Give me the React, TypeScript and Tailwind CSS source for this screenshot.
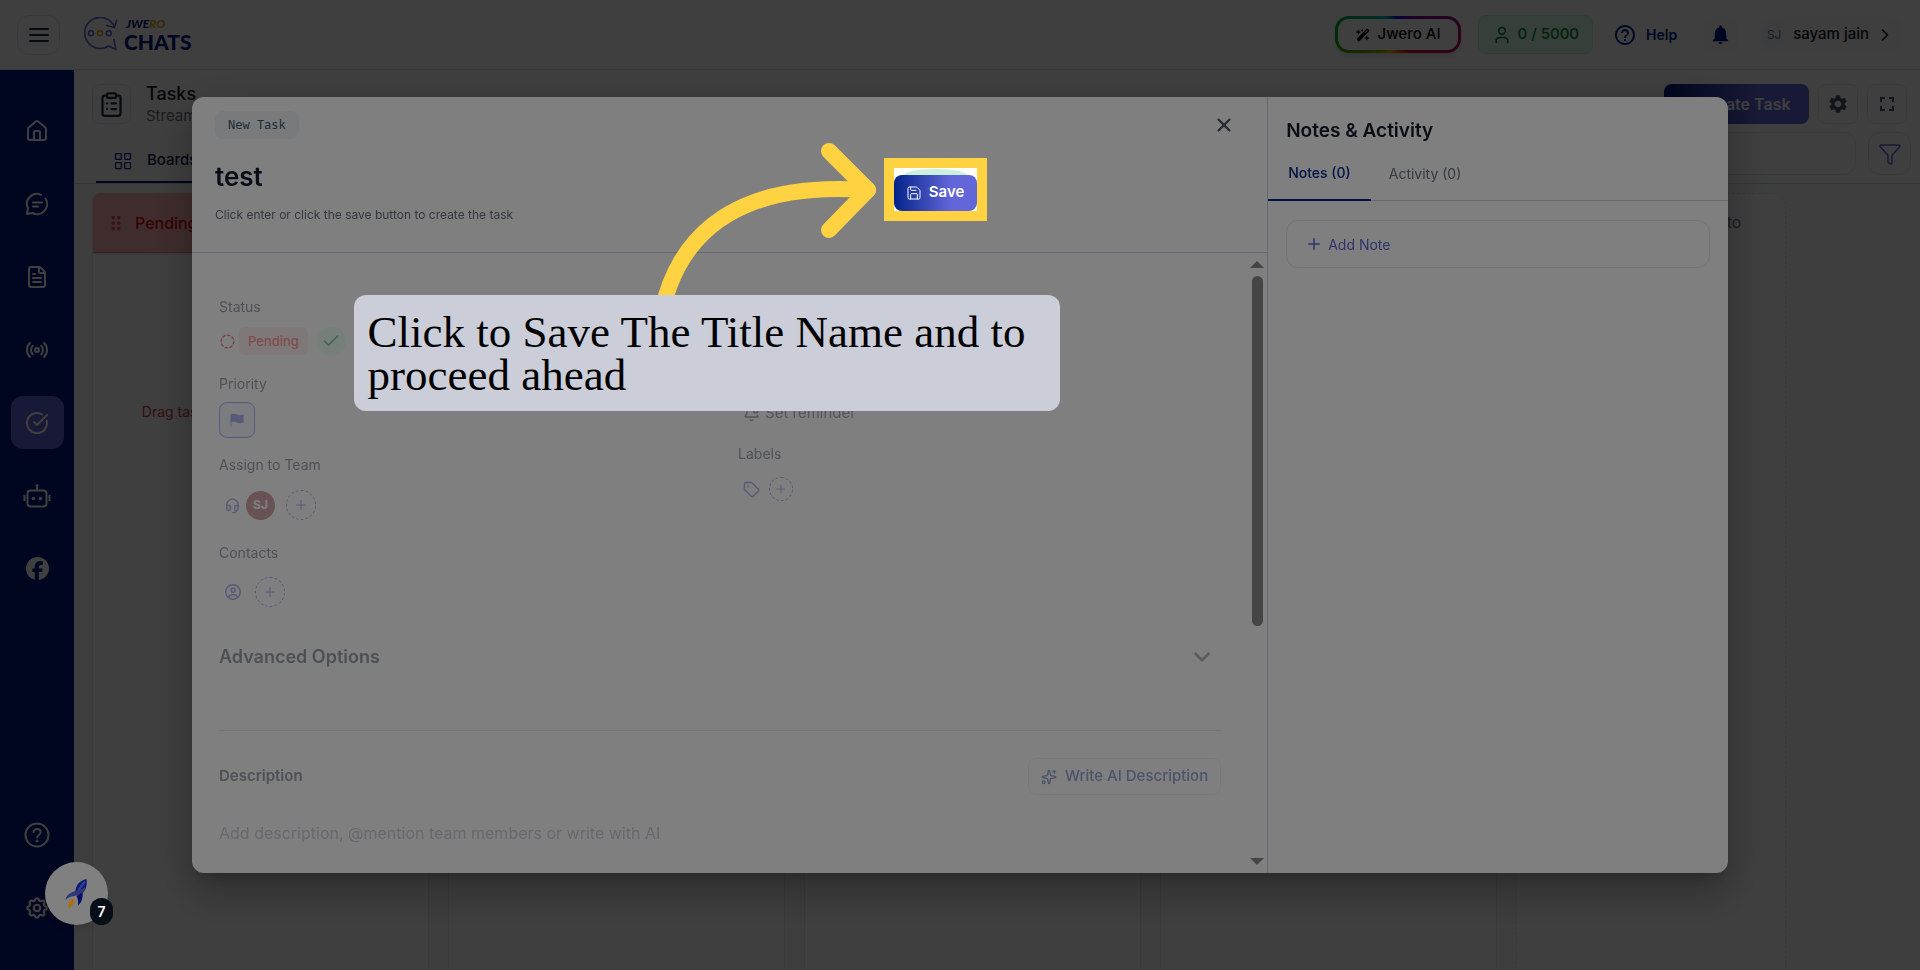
import { useState, type ReactNode } from "react"
import {
  BellDot,
  Check,
  ChevronDown,
  ChevronRight,
  CircleCheckBig,
  ClipboardList,
  FileText,
  Funnel,
  House,
  LayoutGrid,
  Plus,
  Radio,
  Save,
  Sparkles,
  Tag,
  User,
  X,
} from "lucide-react"
import { FaFacebook, FaRegCircleUser, FaWandMagicSparkles } from "react-icons/fa6"
import { HiFlag } from "react-icons/hi2"
import {
  MdDragIndicator,
  MdFullscreen,
  MdHelpOutline,
  MdNotifications,
  MdSettings,
} from "react-icons/md"
import { TbCircleDashed, TbHeadset, TbSettings } from "react-icons/tb"

function MenuIcon() {
  return (
    <svg width="20" height="16" viewBox="0 0 20 16" fill="none" stroke="currentColor" strokeWidth="1.800" strokeLinecap="round">
      <path d="M1 2h18M1 8h18M1 14h18" />
    </svg>
  )
}

function ChatIcon() {
  return (
    <svg width="24" height="24" viewBox="0 0 24 24" fill="none" stroke="currentColor" strokeWidth="2" strokeLinecap="round" strokeLinejoin="round">
      <path d="M16 2.800A10 10 0 0 0 3 16.400L2 22l5.500-1A10 10 0 0 0 20.500 6.700" />
      <path d="M8 10.500h9M8 14.500h5" />
    </svg>
  )
}

function BotIcon() {
  return (
    <svg width="28" height="26" viewBox="0 0 28 26" fill="none" stroke="currentColor" strokeWidth="2" strokeLinejoin="round">
      <rect x="4.5" y="7.5" width="19" height="16" rx="3" />
      <path d="M14 7.500V3M1.500 12v6M26.500 12v6" />
      <circle cx="14" cy="2.500" r="1.500" fill="currentColor" stroke="none" />
      <circle cx="10.500" cy="15.500" r="1.800" fill="currentColor" stroke="none" />
      <circle cx="17.500" cy="15.500" r="1.800" fill="currentColor" stroke="none" />
    </svg>
  )
}

function QuestionIcon() {
  return (
    <svg width="26" height="26" viewBox="0 0 26 26" fill="none" stroke="currentColor" strokeWidth="2" strokeLinecap="round">
      <circle cx="13" cy="13" r="11.500" />
      <path d="M9.600 10.200c.3-2 1.700-3.100 3.500-3.100 2 0 3.500 1.300 3.500 3.200 0 2.700-3.500 2.800-3.500 5.300" />
      <circle cx="13.100" cy="19" r="0.600" fill="currentColor" />
    </svg>
  )
}

function LogoMark() {
  return (
    <svg width="34" height="35" viewBox="0 0 34 35" fill="none" stroke="#6366c9" strokeWidth="1.600" strokeLinejoin="round" strokeLinecap="round">
      <path d="M30.500 10A15.500 15.500 0 1 0 24.500 29L31.800 32.500L29.800 22.500" />
      <path d="M22.800 8.500L30.500 10.500L32.500 3.500" />
      <circle cx="7" cy="16.200" r="2.500" />
      <circle cx="16" cy="16.200" r="2.500" stroke="#e8a41c" />
      <circle cx="24.800" cy="16.200" r="2.500" />
    </svg>
  )
}

function Rocket() {
  return (
    <svg width="24" height="32" viewBox="0 0 24 32">
      <path d="M21.500 1C14 3 11 7 10.500 13l6 3.500C21 12 22.500 7 21.500 1z" fill="#0a1c70" />
      <path d="M20 3.500C17.500 6.500 15 9.500 13.500 12.500" stroke="#33429a" strokeWidth="2" fill="none" />
      <path d="M20.500 8.500C16 13 8 12 3 17c-1.500 1.500-2.500 3.500-2.500 5C5 17.500 9 18.500 14 17c4-1.500 6-4.500 6.500-8.500z" fill="#2f3777" />
      <path d="M17.500 14.500c.5 5-.5 9.500-4.500 13 .5-3.500 0-6.500-1.500-9.500z" fill="#030f66" />
      <path d="M3.500 31C3 25 4.500 21.500 8 20.500c2.500 1.500 2 5-4.500 10.500z" fill="#a9700f" />
    </svg>
  )
}

const NAV_ITEMS: { label: string; icon: ReactNode }[] = [
  { label: "Home", icon: <House size={24} /> },
  { label: "Chats", icon: <ChatIcon /> },
  { label: "Templates", icon: <FileText size={24} /> },
  { label: "Broadcast", icon: <Radio size={24} /> },
  { label: "Tasks", icon: <CircleCheckBig size={24} /> },
  { label: "Bots", icon: <BotIcon /> },
  { label: "Facebook", icon: <FaFacebook size={23} /> },
]

function TopBar() {
  return (
    <header className="flex h-[70px] items-center border-b border-gray-200 bg-white px-[17px]">
      <button aria-label="Menu" className="flex h-10 w-[43px] items-center justify-center rounded-xl border border-gray-200 text-slate-800">
        <MenuIcon />
      </button>
      <a href="#" aria-label="Jwero Chats" className="ml-6 flex items-center gap-[6px]">
        <LogoMark />
        <span className="flex flex-col font-['Lato'] font-black">
          <span className="pl-[2px] text-[12px] leading-[14px] text-[#001a80] italic">
            JWE<span className="text-[#e8a41c]">RO</span>
          </span>
          <span className="text-[21px] leading-[22px] text-[#001a80]">CHATS</span>
        </span>
      </a>

      <div className="ml-auto flex items-center">
        <button className="h-[37px] rounded-[14px] bg-[conic-gradient(from_270deg,#00a020,#00b8b8_14%,#1010e0_24%,#8000a0_38%,#c0105a_55%,#e01010_66%,#d0c000_82%,#60a000_94%,#00a020)] p-[3px] shadow-md">
          <span className="flex h-full items-center gap-2 rounded-[11px] bg-white px-[18px] text-[15px] font-medium text-black">
            <FaWandMagicSparkles size={14} />
            Jwero AI
          </span>
        </button>
        <span className="ml-[17px] flex h-[39px] items-center gap-[5px] rounded-lg border border-green-200 bg-green-100 px-[13px] text-[15px] font-medium text-green-700">
          <User size={20} />
          0 / 5000
        </span>
        <button className="ml-5 flex items-center gap-[9px] text-[14px] font-semibold text-[#00238a]">
          <MdHelpOutline size={24} />
          Help
        </button>
        <button aria-label="Notifications" className="ml-[26px] flex size-[35px] items-center justify-center rounded-lg bg-gray-50 text-[#001a80]">
          <MdNotifications size={23} />
        </button>
        <button className="ml-[18px] flex h-[35px] items-center rounded-xl bg-gray-50 pr-2 pl-[5px] text-[15px] font-medium text-gray-900">
          <span className="mr-[6px] flex size-[26px] items-center justify-center rounded-full bg-slate-100 text-[12px] font-normal text-slate-500">SJ</span>
          sayam jain
          <ChevronRight size={20} className="ml-[6px]" />
        </button>
      </div>
    </header>
  )
}

function SideNav() {
  return (
    <nav className="flex w-[74px] shrink-0 flex-col items-center bg-[#001a80] pt-[34px] pb-9 text-white">
      <div className="flex flex-col gap-5">
        {NAV_ITEMS.map((item) => (
          <a
            key={item.label}
            href="#"
            aria-label={item.label}
            className={`flex size-[53px] items-center justify-center rounded-xl ${item.label === "Tasks" ? "bg-[#6366d9]" : ""}`}
          >
            {item.icon}
          </a>
        ))}
      </div>
      <div className="mt-auto flex flex-col gap-5">
        <a href="#" aria-label="Help" className="flex size-[53px] items-center justify-center">
          <QuestionIcon />
        </a>
        <a href="#" aria-label="Settings" className="flex size-[53px] items-center justify-center">
          <TbSettings size={26} />
        </a>
      </div>
    </nav>
  )
}

function TasksPage() {
  return (
    <main className="flex min-w-0 flex-1 flex-col bg-white">
      <div className="flex h-[54px] items-start justify-between pt-[14px] pr-[13px] pl-[18px]">
        <div className="flex items-start gap-[15px]">
          <span className="flex h-10 w-[39px] items-center justify-center rounded-lg border border-gray-200 text-gray-800">
            <ClipboardList size={27} />
          </span>
          <div>
            <h1 className="text-[18px] leading-5 font-medium text-gray-900">Tasks</h1>
            <p className="text-[15px] leading-6 text-gray-500">Streamline your work</p>
          </div>
        </div>
        <div className="flex gap-[9px]">
          <button className="h-10 w-[145px] rounded-lg bg-linear-to-r from-[#001a80] to-[#6366d9] to-65% pl-4 text-[16px] font-semibold text-white">
            Create Task
          </button>
          <button aria-label="Board settings" className="flex size-10 items-center justify-center rounded-lg border border-gray-200 text-gray-600">
            <MdSettings size={22} />
          </button>
          <button aria-label="Full screen" className="flex size-10 items-center justify-center rounded-lg border border-gray-200 text-gray-600">
            <MdFullscreen size={24} />
          </button>
        </div>
      </div>

      <div className="flex h-[60px] items-end justify-between border-b border-gray-300 pr-[9px] pl-[22px]">
        <button className="flex h-[43px] items-center gap-[14px] border-b-2 border-[#001a80] px-[17px] text-[15px] font-medium text-[#0a1b55]">
          <LayoutGrid size={20} strokeWidth={1.500} className="text-[#00238a]" />
          Boards
        </button>
        <div className="flex items-center gap-3 self-center">
          <input aria-label="Search tasks" className="h-[43px] w-[320px] rounded-xl border border-gray-200" />
          <button aria-label="Filter" className="flex size-[43px] items-center justify-center rounded-xl border border-gray-200 text-[#6366d9]">
            <Funnel size={24} strokeWidth={1.500} />
          </button>
        </div>
      </div>

      <div className="flex flex-1 gap-[19px] bg-gray-50 pt-[9px] pl-[18px]">
        <section className="flex w-[337px] shrink-0 flex-col rounded-t-lg border-x border-gray-200 bg-white">
          <h2 className="flex h-[60px] items-center gap-2 rounded-t-lg border-b border-[#e08080] bg-[#ffb5b5] px-3 text-[16px] font-medium text-[#e00000] shadow-sm">
            <MdDragIndicator size={22} className="text-[#e05050]" />
            Pending
          </h2>
          <p className="mt-[148px] text-center text-[14px] text-[#d04040]">Drag tasks here to change its status</p>
        </section>
        <section className="w-[337px] shrink-0 border-x border-gray-200 bg-white" />
        <section className="w-[337px] shrink-0 border-x border-gray-200 bg-white" />
        <section className="w-[337px] shrink-0 border-x border-gray-200 bg-white" />
        <section className="w-[270px] shrink-0 rounded-t-2xl border border-dashed border-gray-200 bg-white pt-4 text-center text-[16px] text-gray-500">
          Create another board to
        </section>
      </div>
    </main>
  )
}

function FieldLabel({ children }: { children: ReactNode }) {
  return <h3 className="text-[14px] leading-5 text-gray-700">{children}</h3>
}

function AddButton({ label, small }: { label: string; small?: boolean }) {
  return (
    <button
      aria-label={label}
      className={`flex items-center justify-center rounded-full border border-dashed border-[#6366d9] text-[#6366d9] ${small ? "size-6" : "size-[30px]"}`}
    >
      <Plus size={small ? 14 : 16} strokeWidth={1.500} />
    </button>
  )
}

/* Dims everything around the save button and points the callout at it */
function SaveStep() {
  return (
    <div className="relative">
      <span className="absolute -top-[7px] left-0 h-[43px] w-full bg-white" />
      <span className="absolute -top-[6px] left-[10px] h-[12px] w-[63px] rounded-[50%] bg-[#c9f2dc]" />
      <button className="relative flex h-9 w-[83px] items-center justify-center gap-[7px] rounded-lg bg-linear-to-r from-[#00238a] to-[#6366d9] to-70% text-[15px] font-semibold text-white">
        <Save size={16} strokeWidth={1.500} />
        Save
      </button>
      <span className="pointer-events-none absolute -inset-x-[10px] -top-[17px] -bottom-[10px] z-10 border-10 border-[#ffd242] shadow-[0_0_0_9999px_rgba(0,0,0,0.5)]" />
      <svg
        className="pointer-events-none absolute -top-[40px] -left-[240px] z-20"
        width="230"
        height="170"
        viewBox="0 0 230 170"
        fill="none"
        stroke="#ffd242"
        strokeWidth="16"
        strokeLinecap="round"
        strokeLinejoin="round"
      >
        <path d="M12 161C29 105 77 45 214 55" />
        <path d="M175 16L214 55L175 95" />
      </svg>
      <p className="absolute top-[120px] -left-[540px] z-30 h-[116px] w-[706px] rounded-xl bg-[#cbced8] py-4 pl-[14px] font-['Liberation_Serif',serif] text-[45px] leading-[43px] text-black">
        Click to Save The Title Name and to proceed ahead
      </p>
    </div>
  )
}

function TaskFields() {
  return (
    <div className="relative flex min-h-0 flex-1">
      <div className="flex-1 overflow-hidden pt-11 pr-[26px] pl-[27px] opacity-50">
        <div className="grid grid-cols-2 gap-9">
          <div>
            <FieldLabel>Status</FieldLabel>
            <div className="mt-[9px] flex h-[30px] items-center">
              <TbCircleDashed size={17} className="text-red-600" />
              <span className="ml-[3px] rounded-md bg-red-100 px-[9px] text-[13px] leading-7 font-medium text-red-500">Pending</span>
              <button aria-label="Mark complete" className="ml-[9px] flex size-[29px] items-center justify-center rounded-full bg-green-100 text-emerald-600">
                <Check size={20} />
              </button>
            </div>
            <div className="mt-[18px]">
              <FieldLabel>Priority</FieldLabel>
            </div>
            <button aria-label="Set priority" className="mt-2 flex size-9 items-center justify-center rounded-lg border border-[#6366d9] bg-indigo-50 text-[#6366d9]">
              <HiFlag size={16} />
            </button>
            <div className="mt-[17px]">
              <FieldLabel>Assign to Team</FieldLabel>
            </div>
            <div className="mt-[15px] flex h-[30px] items-center pl-[5px]">
              <TbHeadset size={17} className="text-[#6366d9]" />
              <span className="ml-[5px] flex size-[29px] items-center justify-center rounded-full bg-[#a34a4e] text-[12px] font-bold text-white">SJ</span>
              <span className="ml-[11px]">
                <AddButton label="Assign member" />
              </span>
            </div>
            <div className="mt-[23px]">
              <FieldLabel>Contacts</FieldLabel>
            </div>
            <div className="mt-[14px] flex h-[30px] items-center gap-[14px] pl-[6px] text-[#6366d9]">
              <FaRegCircleUser size={16} />
              <AddButton label="Add contact" />
            </div>
          </div>

          <div className="pt-[106px]">
            <button className="flex h-5 items-center gap-[5px] pl-[5px] text-[15px] text-gray-600">
              <BellDot size={17} />
              Set reminder
            </button>
            <div className="mt-[21px]">
              <FieldLabel>Labels</FieldLabel>
            </div>
            <div className="mt-[13px] flex h-6 items-center gap-[9px] pl-[5px] text-[#6366d9]">
              <Tag size={17} strokeWidth={2} />
              <AddButton label="Add label" small />
            </div>
          </div>
        </div>

        <button className="mt-9 flex h-[27px] w-full items-center justify-between pr-[6px] text-[18px] font-semibold text-slate-700">
          Advanced Options
          <ChevronDown size={26} strokeWidth={2.500} className="text-gray-500" />
        </button>
        <hr className="mt-[60px] border-gray-300" />
        <div className="mt-[27px] flex items-center justify-between">
          <label htmlFor="description" className="text-[15px] font-semibold text-gray-700">
            Description
          </label>
          <button className="flex h-[37px] items-center gap-2 rounded-lg border border-gray-200 px-[12px] text-[15px] font-medium text-[#2b4bb0]">
            <Sparkles size={16} strokeWidth={2} />
            Write AI Description
          </button>
        </div>
        <textarea
          id="description"
          placeholder="Add description, @mention team members or write with AI"
          className="mt-[26px] block h-10 w-full resize-none text-[16px] placeholder:text-gray-400"
        />
      </div>

      <div className="flex w-5 shrink-0 flex-col items-center pt-2 pb-2">
        <span className="border-x-[7px] border-b-[7px] border-x-transparent border-b-[#8a8a8a]" />
        <span className="mt-2 h-[350px] w-[11px] rounded-full bg-[#8a8a8a]" />
        <span className="mt-auto border-x-[7px] border-t-[7px] border-x-transparent border-t-[#8a8a8a]" />
      </div>
    </div>
  )
}

function TaskDialog() {
  const [title, setTitle] = useState("test")
  const [tab, setTab] = useState<"notes" | "activity">("notes")

  return (
    <div className="fixed inset-0 z-10 flex items-center justify-center bg-black/50">
      <div
        role="dialog"
        aria-label="New Task"
        className="flex h-[80vh] w-[80vw] rounded-xl bg-white shadow-[0_11px_15px_-7px_rgba(0,0,0,0.2),0_24px_38px_3px_rgba(0,0,0,0.14),0_9px_46px_8px_rgba(0,0,0,0.12)]"
      >
        <div className="flex w-[70%] flex-col">
          <div className="relative z-20 border-b border-gray-300 px-6 pt-[9px] pb-[25px] pl-[23px]">
            <div className="flex items-center justify-between">
              <span className="rounded-lg bg-slate-100 px-[13px] font-['DejaVu_Sans_Mono',monospace] text-[12px] leading-7 text-slate-600">New Task</span>
              <button aria-label="Close" className="p-2 text-gray-600">
                <X size={22} strokeWidth={2.500} />
              </button>
            </div>
            <div className="mt-[14px] flex items-center">
              <div className="w-[66%] pb-1">
                <input
                  aria-label="Task title"
                  value={title}
                  onChange={(e) => setTitle(e.target.value)}
                  className="block h-9 w-full text-[26px] font-semibold text-gray-900 outline-none"
                />
                <p className="mt-[13px] text-[12px] leading-4 text-gray-500">
                  Click enter or click the save button to create the task
                </p>
              </div>
              <SaveStep />
            </div>
          </div>
          <TaskFields />
        </div>

        <aside className="w-[30%] rounded-r-xl border-l border-gray-300">
          <h2 className="pt-[22px] pl-[18px] text-[19px] leading-6 font-semibold text-gray-900">Notes & Activity</h2>
          <div role="tablist" className="mt-[2px] flex h-14 border-b border-gray-300 text-[14px]">
            <button
              role="tab"
              aria-selected={tab === "notes"}
              onClick={() => setTab("notes")}
              className={`h-14 px-5 ${tab === "notes" ? "border-b-2 border-[#00238a] font-medium text-[#00238a]" : "text-gray-500"}`}
            >
              Notes (0)
            </button>
            <button
              role="tab"
              aria-selected={tab === "activity"}
              onClick={() => setTab("activity")}
              className={`h-14 px-[18px] ${tab === "activity" ? "border-b-2 border-[#00238a] font-medium text-[#00238a]" : "text-gray-500"}`}
            >
              Activity (0)
            </button>
          </div>
          <div className="px-[18px] pt-[19px]">
            <button className="flex h-12 w-full items-center gap-[5px] rounded-xl border border-gray-200 px-[18px] text-[14px] text-[#6366d9]">
              <Plus size={18} strokeWidth={2} />
              Add Note
            </button>
          </div>
        </aside>
      </div>
    </div>
  )
}

export default function App() {
  return (
    <div className="flex h-screen flex-col overflow-hidden font-['Inter',sans-serif]">
      <TopBar />
      <div className="flex min-h-0 flex-1">
        <SideNav />
        <TasksPage />
      </div>
      <TaskDialog />
      <button aria-label="Getting started, 7 steps left" className="fixed bottom-[45px] left-[45px] z-20 flex size-[63px] items-center justify-center rounded-full bg-[#808080] shadow-md">
        <Rocket />
        <span className="absolute -right-[5px] bottom-0 flex h-[27px] w-[23px] items-center justify-center rounded-full bg-[#080e18] text-[14px] font-semibold text-white">
          7
        </span>
      </button>
    </div>
  )
}
